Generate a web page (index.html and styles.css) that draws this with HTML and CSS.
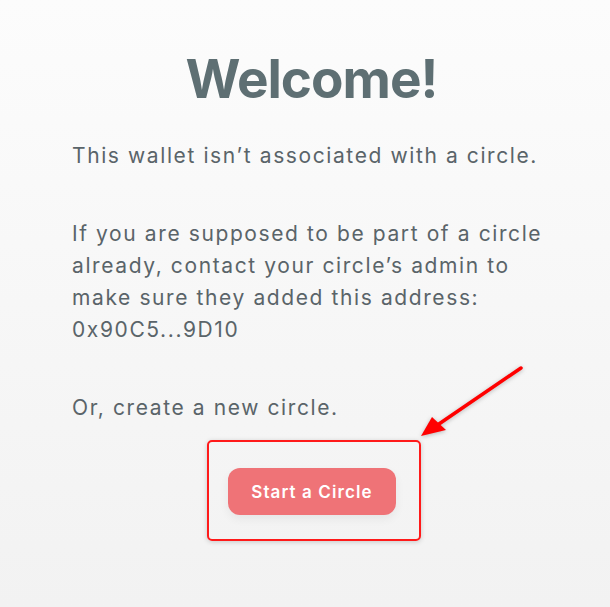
FILE: index.html
```html
<!DOCTYPE html>
<html>
<head>
<meta charset="utf-8">
<link rel="stylesheet" href="styles.css">
</head>
<body>
<main class="page">
  <h1 class="title">Welcome!</h1>
  <p class="text">This wallet isn’t associated with a circle.</p>
  <p class="text">If you are supposed to be part of a circle already, contact your circle’s admin to make sure they added this address: 0x90C5...9D10</p>
  <p class="text">Or, create a new circle.</p>
  <div class="actions">
    <div class="highlight">
      <button class="btn">Start a Circle</button>
    </div>
  </div>
</main>
<svg class="arrow" width="610" height="607" viewBox="0 0 610 607">
  <line x1="521" y1="368" x2="436" y2="426" stroke="#ff0000" stroke-width="3.5" stroke-linecap="round"/>
  <polygon points="421,436 432,417 446,430" fill="#ff0000"/>
</svg>
</body>
</html>
```
FILE: styles.css
```css
html, body {
  margin: 0;
  padding: 0;
}
body {
  width: 610px;
  height: 607px;
  overflow: hidden;
  background: linear-gradient(to bottom, #fcfcfc 0%, #f2f2f2 100%);
  font-family: Inter, "Liberation Sans", sans-serif;
  position: relative;
}
.page {
  width: 479px;
  margin-left: 72px;
  padding-top: 50px;
}
.title {
  margin: 0;
  text-align: center;
  font-size: 53px;
  line-height: 58px;
  font-weight: 700;
  color: #5e6f73;
  letter-spacing: -1px;
}
.text {
  margin: 0 0 46px 0;
  font-size: 21px;
  line-height: 32px;
  color: #5a6469;
  letter-spacing: 1.6px;
}
.title + .text {
  margin-top: 32px;
}
.actions {
  display: flex;
  justify-content: center;
  margin-top: -30px;
  padding-left: 5px;
}
.highlight {
  border: 2px solid #ff1a1a;
  border-radius: 5px;
  padding: 26px 23px 24px 19px;
  box-shadow: 0 1px 5px rgba(0,0,0,0.18);
}
.btn {
  display: block;
  width: 168px;
  height: 47px;
  border: none;
  border-radius: 12px;
  background: #ef7377;
  color: #ffffff;
  font-family: Inter, "Liberation Sans", sans-serif;
  font-size: 17px;
  font-weight: 600;
  letter-spacing: 1.1px;
  box-shadow: 0 4px 10px rgba(0,0,0,0.06);
}
.arrow {
  position: absolute;
  left: 0;
  top: 0;
  pointer-events: none;
  filter: drop-shadow(0 1px 2px rgba(0,0,0,0.25));
}
```
